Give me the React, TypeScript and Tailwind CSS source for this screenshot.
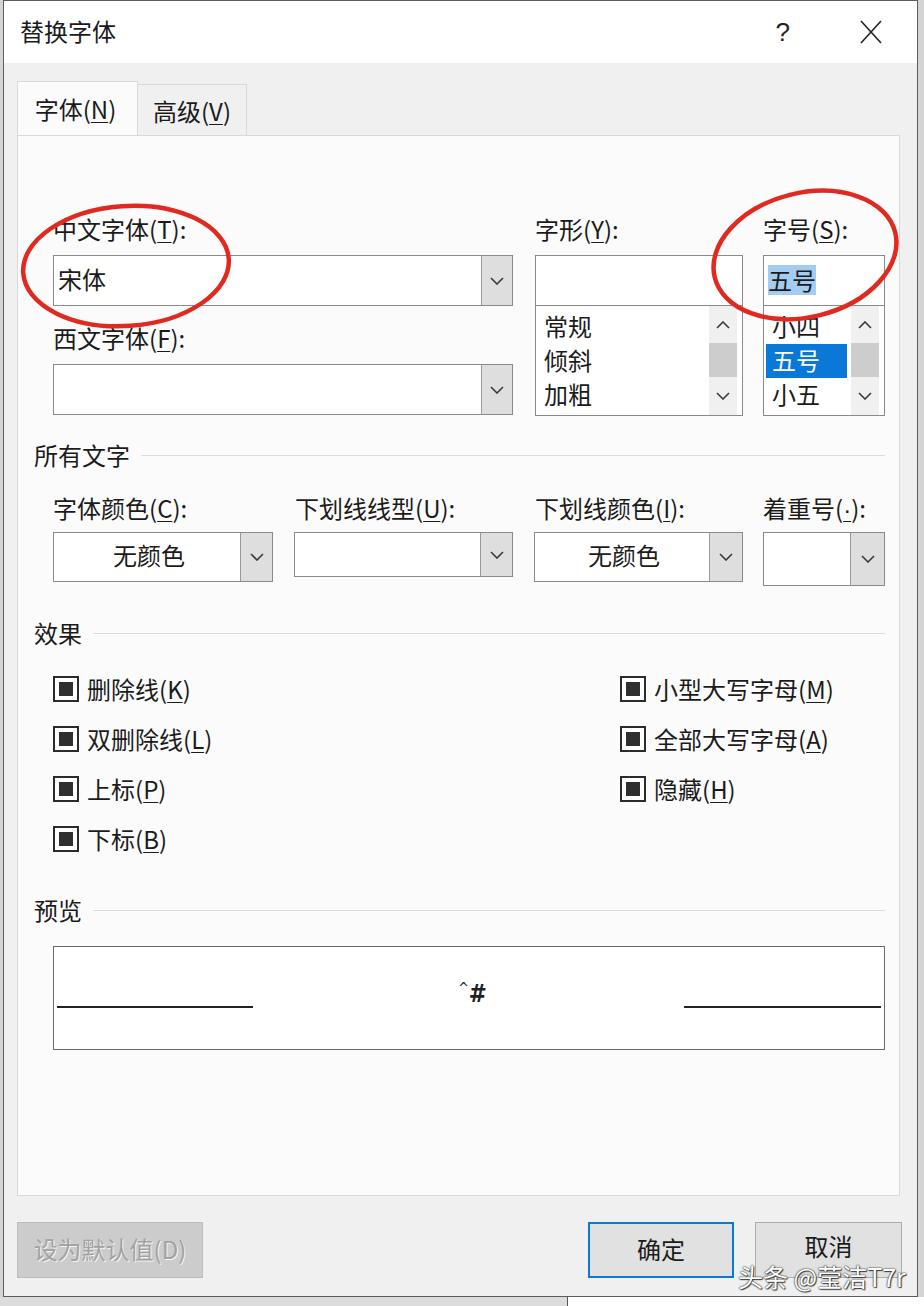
function K({ k }: { k: string }) {
  return <span className="underline decoration-1 underline-offset-[3px]">{k}</span>;
}

function Chevron({ down = true }: { down?: boolean }) {
  return (
    <svg width="14" height="8" viewBox="0 0 14 8" className={down ? "" : "rotate-180"}>
      <path d="M1 1 L7 7 L13 1" fill="none" stroke="#3a3a3a" strokeWidth="1.6" />
    </svg>
  );
}

function Combo({
  width,
  height,
  btn,
  value,
  center,
}: {
  width: string;
  height: string;
  btn: string;
  value?: string;
  center?: boolean;
}) {
  return (
    <div className={`flex ${width} ${height} border border-[#8a8a8a] bg-white`}>
      <div className={`flex flex-1 items-center pb-[4px] pl-[4px] ${center ? "justify-center" : ""}`}>
        {value}
      </div>
      <div className={`flex ${btn} items-center justify-center border-l border-[#9a9a9a] bg-[#dedede]`}>
        <Chevron />
      </div>
    </div>
  );
}

function ListBox({ items, selected }: { items: string[]; selected?: number }) {
  return (
    <div className="flex h-[110px] border border-t-0 border-[#8a8a8a] bg-white">
      <div className="flex-1 overflow-hidden pt-[4px] pl-[2px] pr-[4px]">
        {items.map((it, i) => (
          <div
            key={it}
            className={`flex h-[34px] items-center pb-[2px] pl-[6px] ${
              i === selected ? "bg-[#0a78d7] text-white" : ""
            }`}
          >
            {it}
          </div>
        ))}
      </div>
      <div className="mr-[5px] flex w-[28px] flex-col bg-[#f0f0f0]">
        <div className="flex h-[37px] items-center justify-center">
          <Chevron down={false} />
        </div>
        <div className="h-[34px] bg-[#cdcdcd]" />
        <div className="flex flex-1 items-center justify-center">
          <Chevron />
        </div>
      </div>
    </div>
  );
}

function GroupHead({ title }: { title: string }) {
  return (
    <div className="-ml-[19px] flex h-[28px] items-center gap-[11px]">
      <span className="leading-[24px]">{title}</span>
      <div className="h-px flex-1 bg-[#d8dde3]" />
    </div>
  );
}

function Check({ label, k }: { label: string; k: string }) {
  return (
    <div className="flex h-[50px] items-center">
      <div className="flex h-[26px] w-[26px] items-center justify-center border-2 border-[#2b2b2b] bg-white">
        <div className="h-[14px] w-[14px] bg-[#2f2f2f]" />
      </div>
      <span className="ml-[8px] leading-[24px]">
        {label}(<K k={k} />)
      </span>
    </div>
  );
}

export default function App() {
  return (
    <div className="relative h-[1306px] w-[924px] overflow-hidden bg-[#d4d4d4] font-['Noto_Sans_CJK_SC',sans-serif] text-[24px] leading-[28px] text-[#1b1b1b]">
      <div className="ml-[3px] flex h-[1297px] w-[915px] flex-col border border-[#5c5c5c] bg-[#f0f0f0]">
        {/* title bar */}
        <div className="flex h-[62px] items-center bg-white pl-[16px]">
          <span className="pb-[2px]">替换字体</span>
          <span className="ml-auto font-['Liberation_Sans',sans-serif] text-[26px] font-light text-[#222]">?</span>
          <svg width="22" height="24" viewBox="0 0 22 24" className="ml-[70px] mr-[35px]">
            <path d="M1 1 L21 23 M21 1 L1 23" stroke="#222" strokeWidth="1.6" />
          </svg>
        </div>

        <div className="px-[13px]">
          {/* tabs */}
          <div className="mt-[18px] flex items-start">
            <div className="relative z-10 -mb-px flex h-[54px] w-[121px] items-center justify-center border border-b-0 border-[#d9d9d9] bg-[#fbfbfc]">
              <span className="-ml-[4px]">
                字体(<K k="N" />)
              </span>
            </div>
            <div className="mt-[3px] flex h-[51px] w-[109px] items-center justify-center border border-b-0 border-l-0 border-[#d9d9d9] bg-[#f0f0f0]">
              <span className="mt-[2px]">
                高级(<K k="V" />)
              </span>
            </div>
          </div>

          {/* panel */}
          <div className="h-[1061px] w-[883px] border border-[#d9d9d9] bg-[#fbfbfc] pl-[35px] pr-[14px] pt-[82px]">
            <div className="flex gap-[22px]">
              <div className="w-[460px]">
                <div className="h-[28px] leading-[22px]">
                  中文字体(<K k="T" />):
                </div>
                <div className="mt-[9px]">
                  <Combo width="w-[460px]" height="h-[51px]" btn="w-[31px]" value="宋体" />
                </div>
                <div className="mt-[21px] h-[28px] leading-[22px]">
                  西文字体(<K k="F" />):
                </div>
                <div className="mt-[9px]">
                  <Combo width="w-[460px]" height="h-[51px]" btn="w-[31px]" />
                </div>
              </div>
              <div className="w-[208px]">
                <div className="h-[28px] leading-[22px]">
                  字形(<K k="Y" />):
                </div>
                <div className="mt-[9px] h-[51px] border border-[#8a8a8a] bg-white" />
                <ListBox items={["常规", "倾斜", "加粗"]} />
              </div>
              <div className="ml-[-2px] w-[122px]">
                <div className="h-[28px] leading-[22px]">
                  字号(<K k="S" />):
                </div>
                <div className="mt-[9px] flex h-[51px] items-center border border-[#8a8a8a] bg-white pb-[2px] pl-[4px]">
                  <span className="bg-[#a3cdf0] leading-[30px]">五号</span>
                </div>
                <ListBox items={["小四", "五号", "小五"]} selected={1} />
              </div>
            </div>

            {/* all text */}
            <div className="mt-[25px]">
              <GroupHead title="所有文字" />
            </div>
            <div className="mt-[28px] flex h-[28px] leading-[22px]">
              <div className="w-[242px]">
                字体颜色(<K k="C" />):
              </div>
              <div className="w-[240px]">
                下划线线型(<K k="U" />):
              </div>
              <div className="w-[228px]">
                下划线颜色(<K k="I" />):
              </div>
              <div>
                着重号(
                <span className="font-['Liberation_Sans',sans-serif] underline decoration-1 underline-offset-[3px]">·</span>
                ):
              </div>
            </div>
            <div className="mt-[7px] flex items-start">
              <Combo width="w-[221px]" height="h-[50px]" btn="w-[32px]" value="无颜色" center />
              <div className="ml-[21px]">
                <Combo width="w-[219px]" height="h-[45px]" btn="w-[32px]" />
              </div>
              <div className="ml-[21px]">
                <Combo width="w-[209px]" height="h-[50px]" btn="w-[33px]" value="无颜色" center />
              </div>
              <div className="ml-[20px]">
                <Combo width="w-[122px]" height="h-[54px]" btn="w-[34px]" />
              </div>
            </div>

            {/* effects */}
            <div className="mt-[33px]">
              <GroupHead title="效果" />
            </div>
            <div className="mt-[17px] flex">
              <div className="w-[567px]">
                <Check label="删除线" k="K" />
                <Check label="双删除线" k="L" />
                <Check label="上标" k="P" />
                <Check label="下标" k="B" />
              </div>
              <div>
                <Check label="小型大写字母" k="M" />
                <Check label="全部大写字母" k="A" />
                <Check label="隐藏" k="H" />
              </div>
            </div>

            {/* preview */}
            <div className="mt-[32px]">
              <GroupHead title="预览" />
            </div>
            <div className="mt-[22px] flex h-[104px] w-[832px] items-center border border-[#6a6a6a] bg-white px-[3px]">
              <div className="mt-[18px] h-[2px] w-[196px] bg-[#222]" />
              <div className="flex flex-1 justify-center">
                <span className="mb-[6px] ml-[8px] font-['DejaVu_Sans_Condensed',sans-serif] text-[24px] font-bold text-[#222]">
                  <span className="relative -top-[9px] text-[14px] font-normal">^</span>#
                </span>
              </div>
              <div className="mt-[18px] h-[2px] w-[197px] bg-[#222]" />
            </div>
          </div>

          {/* buttons */}
          <div className="mt-[26px] flex items-start pr-[2px]">
            <div className="flex h-[56px] w-[186px] items-center justify-center border border-[#bdbdbd] bg-[#cccccc] pb-[2px] text-[#a2a2a2] [text-shadow:1px_1px_0_#f4f4f4]">
              设为默认值(D)
            </div>
            <div className="ml-auto flex h-[56px] w-[146px] items-center justify-center border-2 border-[#0a78d7] bg-[#e1e1e1] pb-[2px]">
              确定
            </div>
            <div className="ml-[21px] flex h-[56px] w-[147px] items-center justify-center border border-[#adadad] bg-[#e1e1e1]">
              <span className="-mt-[8px]">取消</span>
            </div>
          </div>
        </div>
      </div>

      {/* document showing below the dialog */}
      <div className="flex h-[9px]">
        <div className="w-[567px] bg-[#dcdcdc]" />
        <div className="flex-1 border-l border-[#555] bg-white" />
      </div>

      {/* watermark */}
      <div className="absolute left-[738px] top-[1261px] text-[25px] leading-[30px] text-white [text-shadow:0_0_1px_#333,0_0_2px_#333,1px_1px_1px_#444]">
        头条 @莹洁T7r
      </div>

      {/* red annotation rings */}
      <svg className="pointer-events-none absolute left-0 top-0" width="924" height="1306">
        <ellipse cx="126" cy="266" rx="103" ry="60" fill="none" stroke="#e02a20" strokeWidth="4.5" transform="rotate(-4 126 266)" />
        <ellipse cx="805" cy="255" rx="93" ry="62" fill="none" stroke="#e02a20" strokeWidth="4.5" transform="rotate(-14 805 255)" />
      </svg>
    </div>
  );
}
